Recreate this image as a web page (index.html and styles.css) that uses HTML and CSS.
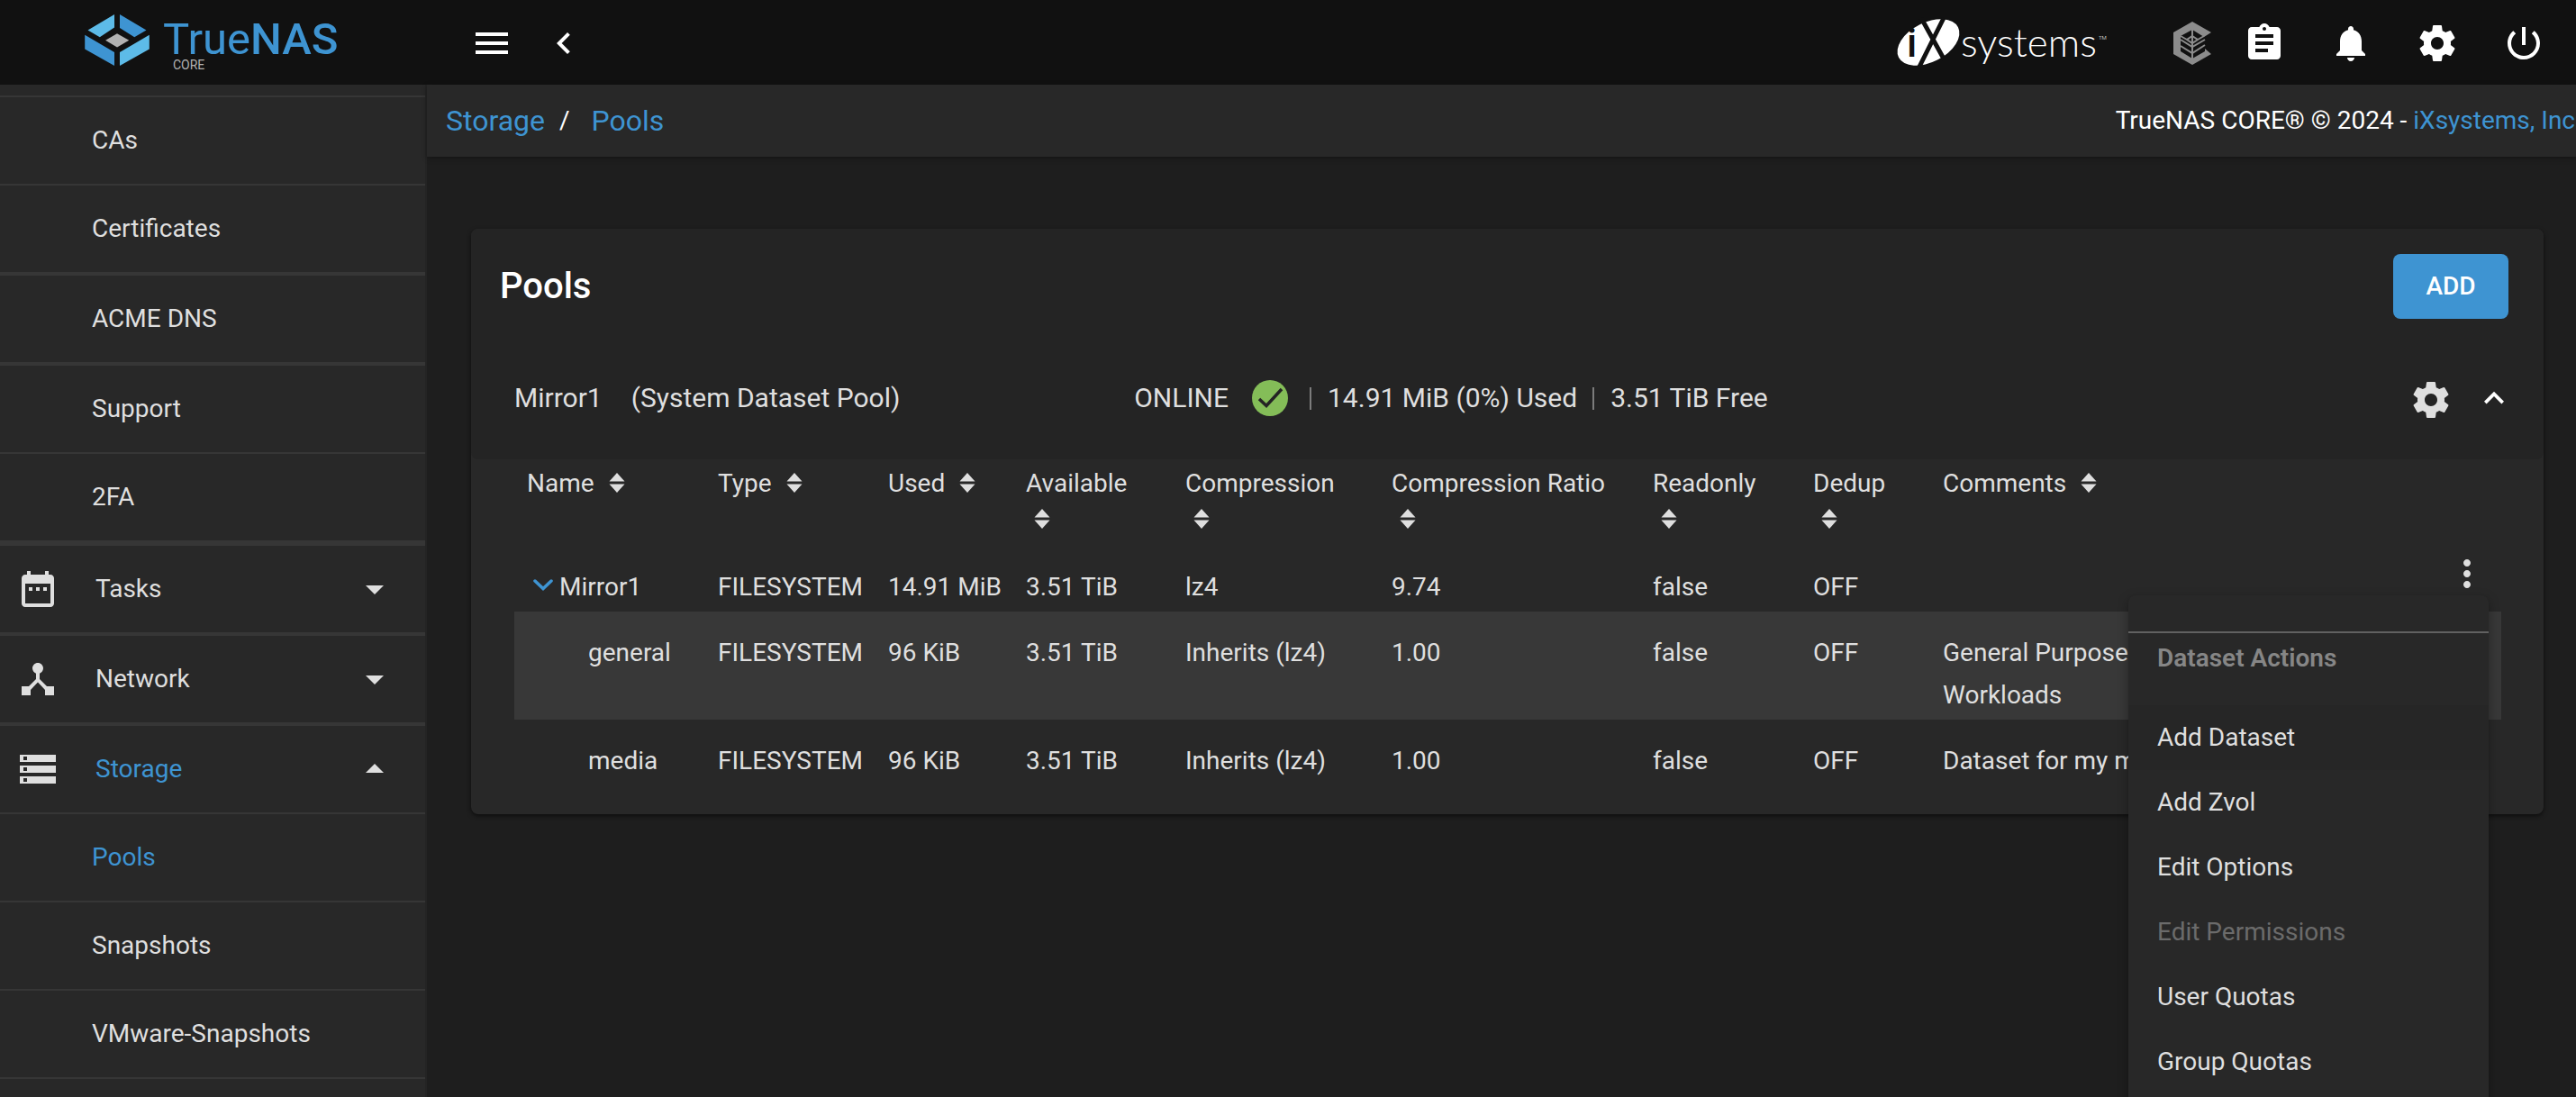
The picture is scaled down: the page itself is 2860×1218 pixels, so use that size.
FILE: index.html
```html
<!DOCTYPE html>
<html lang="en">
<head>
<meta charset="utf-8">
<title>TrueNAS - Pools</title>
<link rel="stylesheet" href="styles.css">
</head>
<body>
<svg class="sprite" aria-hidden="true">
  <symbol id="i-gear" viewBox="0 0 24 24"><path d="M19.43 12.98c.04-.32.07-.64.07-.98s-.03-.66-.07-.98l2.11-1.65c.19-.15.24-.42.12-.64l-2-3.46c-.12-.22-.39-.3-.61-.22l-2.49 1c-.52-.4-1.08-.73-1.69-.98l-.38-2.65C14.46 2.18 14.25 2 14 2h-4c-.25 0-.46.18-.49.42l-.38 2.65c-.61.25-1.17.59-1.69.98l-2.49-1c-.23-.09-.49 0-.61.22l-2 3.46c-.13.22-.07.49.12.64l2.11 1.65c-.04.32-.07.65-.07.98s.03.66.07.98l-2.11 1.65c-.19.15-.24.42-.12.64l2 3.46c.12.22.39.3.61.22l2.49-1c.52.4 1.08.73 1.69.98l.38 2.65c.03.24.24.42.49.42h4c.25 0 .46-.18.49-.42l.38-2.65c.61-.25 1.17-.59 1.69-.98l2.49 1c.23.09.49 0 .61-.22l2-3.46c.12-.22.07-.49-.12-.64l-2.11-1.65zM12 15.5c-1.93 0-3.5-1.57-3.5-3.5s1.57-3.5 3.5-3.5 3.500 1.570 3.500 3.500-1.570 3.500-3.500 3.500z"/></symbol>
  <symbol id="i-down" viewBox="0 0 24 24"><path d="M7 10l5 5 5-5z"/></symbol>
  <symbol id="i-up" viewBox="0 0 24 24"><path d="M7 14l5-5 5 5z"/></symbol>
  <symbol id="i-more" viewBox="0 0 24 24"><path d="M12 8c1.100 0 2-.9 2-2s-.9-2-2-2-2 .9-2 2 .9 2 2 2zm0 2c-1.100 0-2 .9-2 2s.9 2 2 2 2-.9 2-2-.9-2-2-2zm0 6c-1.100 0-2 .9-2 2s.9 2 2 2 2-.9 2-2-.9-2-2-2z"/></symbol>
  <symbol id="i-sort" viewBox="0 0 18 22"><path d="M9 0l8.500 9.500H.5zM9 22l8.500-9.500H.5z"/></symbol>
</svg>

<header class="topbar">
  <a class="brand" href="#" aria-label="TrueNAS CORE">
    <svg class="brand-mark" viewBox="42 48 216 172">
      <path fill="#5dbbe8" d="M141 48v44l-49 32-40-23zM258 117v47l-99 56v-45z"/>
      <path fill="#3e94d2" d="M159 48l89 53-40 23-49-31zM42 117l99 58v45l-99-56z"/>
      <path fill="#b2b2b2" d="M111 135l39-23 40 23-40 23z"/>
    </svg>
    <span class="brand-text">
      <span class="brand-name">True<b>NAS</b></span>
      <span class="brand-edition">CORE</span>
    </span>
  </a>
  <div class="topbar-main">
    <button class="icon-btn" aria-label="Toggle menu"><svg viewBox="0 0 24 24"><path d="M3 18h18v-2H3v2zm0-5h18v-2H3v2zm0-7v2h18V6H3z"/></svg></button>
    <button class="icon-btn" aria-label="Collapse"><svg viewBox="0 0 24 24"><path d="M15.410 7.410L14 6l-6 6 6 6 1.410-1.410L10.830 12z"/></svg></button>
    <a class="vendor" href="#" aria-label="iXsystems">
      <svg viewBox="0 0 234 60">
        <g transform="rotate(-27 36 27)"><ellipse cx="36" cy="27" rx="37" ry="22" fill="#fff"/></g>
        <path d="M28 0L54 47M53 0L25 56" stroke="#111" stroke-width="5" fill="none"/>
        <text class="vendor-i" x="12" y="43">i</text>
        <text class="vendor-name" x="72" y="43">systems</text>
        <text class="vendor-tm" x="225" y="24">TM</text>
      </svg>
    </a>
    <div class="tools">
      <button class="icon-btn" aria-label="TrueCommand"><svg viewBox="0 0 48 48"><path fill="#8c8c8c" fill-rule="evenodd" d="M24 0l21 12-8 5-13-8-13 7v17l13 8 14-8v-3l7 6-21 12L3 36V12z"/><path d="M24 8v33M11 16l7 4M37 16l-7 4M11 20l13 8 14-8M11 27l13 8 14-9M24 16l6 4-6 4-6-4z" fill="none" stroke="#8c8c8c" stroke-width="2"/></svg></button>
      <button class="icon-btn" aria-label="Tasks"><svg viewBox="0 0 24 24"><path d="M19 3h-4.180C14.400 1.840 13.300 1 12 1c-1.300 0-2.400.84-2.820 2H5c-1.100 0-2 .9-2 2v14c0 1.100.9 2 2 2h14c1.100 0 2-.9 2-2V5c0-1.100-.9-2-2-2zm-7 0c.55 0 1 .45 1 1s-.45 1-1 1-1-.45-1-1 .45-1 1-1zm2 14H7v-2h7v2zm3-4H7v-2h10v2zm0-4H7V7h10v2z"/></svg></button>
      <button class="icon-btn" aria-label="Alerts"><svg viewBox="0 0 24 24"><path d="M12 22c1.100 0 2-.9 2-2h-4c0 1.100.89 2 2 2zm6-6v-5c0-3.070-1.640-5.640-4.500-6.320V4c0-.83-.67-1.500-1.500-1.500s-1.500.67-1.500 1.500v.68C7.630 5.360 6 7.920 6 11v5l-2 2v1h16v-1l-2-2z"/></svg></button>
      <button class="icon-btn" aria-label="Settings"><svg><use href="#i-gear"/></svg></button>
      <button class="icon-btn" aria-label="Power"><svg viewBox="0 0 24 24"><path d="M13 3h-2v10h2V3zm4.830 2.170l-1.420 1.420C17.990 7.860 19 9.810 19 12c0 3.870-3.130 7-7 7s-7-3.130-7-7c0-2.190 1.010-4.140 2.580-5.420L6.170 5.170C4.230 6.820 3 9.260 3 12c0 4.970 4.030 9 9 9s9-4.030 9-9c0-2.740-1.230-5.180-3.170-6.830z"/></svg></button>
    </div>
  </div>
</header>

<div class="shell">
  <nav class="sidebar" aria-label="Main">
    <ul class="sub sub-first">
      <li><a href="#">CAs</a></li>
      <li class="thick"><a href="#">Certificates</a></li>
      <li class="thick"><a href="#">ACME DNS</a></li>
      <li><a href="#">Support</a></li>
      <li class="last"><a href="#">2FA</a></li>
    </ul>
    <button class="group"><svg viewBox="0 0 24 24"><path d="M9 11H7v2h2v-2zm4 0h-2v2h2v-2zm4 0h-2v2h2v-2zm2-7h-1V2h-2v2H8V2H6v2H5c-1.110 0-1.990.9-1.990 2L3 20c0 1.100.89 2 2 2h14c1.100 0 2-.9 2-2V6c0-1.100-.9-2-2-2zm0 16H5V9h14v11z"/></svg><span>Tasks</span><svg><use href="#i-down"/></svg></button>
    <button class="group"><svg viewBox="0 0 24 24"><path d="M17 16l-4-4V8.820C14.160 8.400 15 7.300 15 6c0-1.660-1.340-3-3-3S9 4.340 9 6c0 1.300.84 2.400 2 2.820V12l-4 4H3v5h5v-3.050l4-4.200 4 4.200V21h5v-5h-4z"/></svg><span>Network</span><svg><use href="#i-down"/></svg></button>
    <button class="group open"><svg viewBox="0 0 24 24"><path d="M2 20h20v-4H2v4zm2-3h2v2H4v-2zM2 4v4h20V4H2zm4 3H4V5h2v2zm-4 7h20v-4H2v4zm2-3h2v2H4v-2z"/></svg><span>Storage</span><svg><use href="#i-up"/></svg></button>
    <ul class="sub">
      <li><a class="current" href="#">Pools</a></li>
      <li><a href="#">Snapshots</a></li>
      <li><a href="#">VMware-Snapshots</a></li>
    </ul>
  </nav>

  <main class="main">
    <div class="crumbs">
      <div class="crumb-path"><a href="#">Storage</a><span>/</span><a href="#">Pools</a></div>
      <div class="copyright">TrueNAS CORE® © 2024 - <a href="#">iXsystems, Inc</a></div>
    </div>

    <section class="card">
      <div class="card-head">
        <h1>Pools</h1>
        <button class="add">ADD</button>
      </div>
      <div class="pool">
        <div class="pool-name"><span>Mirror1</span><span>(System Dataset Pool)</span></div>
        <div class="pool-status">
          <span>ONLINE</span>
          <svg class="check" viewBox="0 0 40 40"><circle cx="20" cy="20" r="20" fill="#84bd58"/><path d="M8 21l8 7.500L33 10" fill="none" stroke="#242424" stroke-width="3.500"/></svg>
          <span class="stat">14.91 MiB (0%) Used</span><span class="stat">3.51 TiB Free</span>
        </div>
        <div class="pool-actions">
          <button class="icon-btn dim" aria-label="Pool operations"><svg><use href="#i-gear"/></svg></button>
          <button class="icon-btn small" aria-label="Collapse pool"><svg viewBox="0 0 24 24"><path d="M12 7l-6 6 1.410 1.410L12 9.830l4.590 4.580L18 13z"/></svg></button>
        </div>
      </div>

      <div class="table-wrap">
        <table>
          <colgroup><col class="c-name"><col class="c-type"><col class="c-used"><col class="c-avail"><col class="c-comp"><col class="c-ratio"><col class="c-read"><col class="c-dedup"><col class="c-comments"><col></colgroup>
          <thead>
            <tr>
              <th>Name <svg class="sort"><use href="#i-sort"/></svg></th>
              <th>Type <svg class="sort"><use href="#i-sort"/></svg></th>
              <th>Used <svg class="sort"><use href="#i-sort"/></svg></th>
              <th>Available <svg class="sort"><use href="#i-sort"/></svg></th>
              <th>Compression <svg class="sort"><use href="#i-sort"/></svg></th>
              <th>Compression Ratio <svg class="sort"><use href="#i-sort"/></svg></th>
              <th>Readonly <svg class="sort"><use href="#i-sort"/></svg></th>
              <th>Dedup <svg class="sort"><use href="#i-sort"/></svg></th>
              <th>Comments <svg class="sort"><use href="#i-sort"/></svg></th>
              <th></th>
            </tr>
          </thead>
          <tbody>
            <tr>
              <td class="root"><svg class="twist" viewBox="0 0 22 13"><path d="M2 2l9 8.500L20 2" fill="none" stroke="#3e94d2" stroke-width="3.500" stroke-linecap="round"/></svg>Mirror1</td>
              <td>FILESYSTEM</td><td>14.91 MiB</td><td>3.51 TiB</td><td>lz4</td><td>9.74</td><td>false</td><td>OFF</td><td></td>
              <td class="actions">
                <div class="menu-anchor">
                  <button class="icon-btn dim" aria-label="Dataset menu" aria-expanded="true"><svg><use href="#i-more"/></svg></button>
                  <div class="menu" role="menu">
                    <div class="menu-title">Dataset Actions</div>
                    <button role="menuitem" class="focused">Add Dataset</button>
                    <button role="menuitem">Add Zvol</button>
                    <button role="menuitem">Edit Options</button>
                    <button role="menuitem" disabled>Edit Permissions</button>
                    <button role="menuitem">User Quotas</button>
                    <button role="menuitem">Group Quotas</button>
                  </div>
                </div>
              </td>
            </tr>
            <tr class="hover">
              <td class="child">general</td>
              <td>FILESYSTEM</td><td>96 KiB</td><td>3.51 TiB</td><td>Inherits (lz4)</td><td>1.00</td><td>false</td><td>OFF</td><td class="comment">General Purpose Workloads</td><td></td>
            </tr>
            <tr>
              <td class="child">media</td>
              <td>FILESYSTEM</td><td>96 KiB</td><td>3.51 TiB</td><td>Inherits (lz4)</td><td>1.00</td><td>false</td><td>OFF</td><td class="comment">Dataset for my media</td><td></td>
            </tr>
          </tbody>
        </table>
      </div>
    </section>
  </main>
</div>
</body>
</html>
```
FILE: styles.css
```css
:root {
  --blue: #3e94d2;
  --bg: #1e1e1e;
  --panel: #282828;
  --panel-dark: #242424;
  --line: #363636;
  --text: #dfdfdf;
}

* { box-sizing: border-box; }

body {
  margin: 0;
  height: 100vh;
  display: flex;
  flex-direction: column;
  overflow: hidden;
  background: var(--bg);
  color: var(--text);
  font: 400 28px/32px Roboto, "Liberation Sans", sans-serif;
}

a { color: inherit; text-decoration: none; }
button { font: inherit; color: inherit; background: none; border: 0; padding: 0; text-align: left; }
svg { display: block; fill: currentColor; }
ul { list-style: none; margin: 0; padding: 0; }
.sprite { display: none; }

.icon-btn { width: 48px; height: 48px; flex: none; color: #fff; }
.icon-btn svg { width: 100%; height: 100%; }
.icon-btn.dim { color: var(--text); }
.icon-btn.small { width: 44px; height: 44px; }

/* Top bar */
.topbar { display: flex; flex: none; height: 94px; background: #111; }
.brand { display: flex; flex: none; width: 474px; padding: 16px 0 0 94px; gap: 15px; }
.brand-mark { width: 72px; height: 57px; }
.brand-text { display: flex; flex-direction: column; padding-top: 6px; color: var(--blue); }
.brand-name { font-size: 49px; line-height: 44px; font-weight: 400; }
.brand-name b { font-weight: 500; }
.brand-edition { padding-left: 11px; font-size: 14px; line-height: 12px; color: #b2b2b2; }
.topbar-main { display: flex; flex: 1; gap: 32px; padding: 24px 34px 0 48px; }
.vendor { margin: -4px 0 0 auto; }
.vendor svg { width: 234px; height: 60px; overflow: visible; }
.vendor text { fill: #fff; }
.vendor .vendor-i { fill: #111; font: 500 44px Roboto, sans-serif; }
.vendor .vendor-name { font: 300 44px Lato, sans-serif; }
.vendor .vendor-tm { font: 300 6px Roboto, sans-serif; }
.tools { display: flex; gap: 48px; margin-left: 39px; }
.tools .icon-btn:first-child { margin-right: -16px; }

/* Sidebar */
.shell { display: flex; flex: 1; min-height: 0; }
.sidebar { flex: none; width: 474px; background: var(--panel); border-right: 2px solid #242424; overflow: hidden; }
.sub a { display: flex; align-items: center; height: 96px; padding-left: 102px; }
.sub li { border-bottom: 2px solid var(--line); }
.sub .thick { border-bottom-width: 4px; }
.sub .last { border-bottom-width: 6px; }
.sub-first { padding-top: 12px; }
.sub-first li:first-child { border-top: 2px solid var(--line); }
.sub .current, .open span { color: var(--blue); }
.group { display: flex; align-items: center; width: 100%; height: 100px; padding: 0 32px 0 18px; border-bottom: 4px solid var(--line); }
.group.open { height: 98px; border-bottom-width: 2px; }
.group svg { width: 48px; height: 48px; }
.group span { flex: 1; padding-left: 40px; }

/* Breadcrumb */
.main { flex: 1; min-width: 0; }
.crumbs { display: flex; justify-content: space-between; align-items: center; height: 80px; padding: 0 1px 0 21px; background: var(--panel); color: #fff; box-shadow: 0 2px 6px rgba(0, 0, 0, .3); }
.crumbs a { color: var(--blue); }
.crumb-path { display: flex; gap: 16px; font-size: 32px; }
.crumb-path span { font-size: 28px; padding-right: 8px; }

/* Card */
.card { margin: 80px 36px 0 49px; background: var(--panel); border-radius: 8px; box-shadow: 0 2px 5px rgba(0, 0, 0, .6); }
.card-head { display: flex; justify-content: space-between; align-items: center; height: 128px; padding: 0 39px 0 32px; background: var(--panel-dark); border-radius: 8px 8px 0 0; }
h1 { margin: 0; font-size: 40px; font-weight: 500; line-height: 48px; color: #fff; }
.add { width: 128px; height: 72px; border-radius: 8px; background: var(--blue); color: #fff; font-weight: 500; text-align: center; }

.pool { display: grid; grid-template-columns: 31% 1fr auto; align-items: center; height: 128px; padding: 0 33px 8px 48px; background: var(--panel-dark); border-radius: 0 0 8px 8px; font-size: 30px; }
.pool-name { display: flex; gap: 32px; }
.pool-status { display: flex; align-items: center; }
.check { width: 40px; height: 40px; margin: 0 24px 0 26px; }
.stat { display: flex; align-items: center; margin-right: 17px; }
.stat::before { content: ""; width: 2px; height: 25px; margin-right: 18px; background: #7c7c7c; }
.pool-actions { display: flex; align-items: center; gap: 24px; padding-top: 4px; }

/* Dataset table */
.table-wrap { padding: 0 47px 32px 48px; }
table { width: 100%; table-layout: fixed; border-collapse: collapse; }
.c-name { width: 212px; }
.c-type { width: 189px; }
.c-used { width: 153px; }
.c-avail { width: 177px; }
.c-comp { width: 229px; }
.c-ratio { width: 290px; }
.c-read { width: 178px; }
.c-dedup { width: 144px; }
.c-comments { width: 320px; }
th { height: 96px; padding: 7px 14px 0; text-align: left; vertical-align: top; font-weight: 400; line-height: 40px; }
td { padding: 22px 14px 4px; vertical-align: top; line-height: 47px; white-space: nowrap; }
.sort { display: inline-block; width: 18px; height: 22px; margin: 0 10px 0 9px; vertical-align: -1px; }
.hover { background: #383838; }
.root { padding-left: 21px; }
.twist { display: inline-block; width: 22px; height: 13px; margin-right: 7px; vertical-align: 5px; }
.child { padding-left: 82px; }
.comment { white-space: normal; }
.actions { padding: 7px 14px 0; }

/* Dropdown menu */
.menu-anchor { position: relative; width: 48px; height: 48px; margin-left: auto; line-height: 32px; }
.menu-anchor > .icon-btn { display: block; }
.menu { position: absolute; z-index: 2; top: 100%; right: 0; width: 400px; padding: 40px 0 16px; background: var(--panel); border-radius: 8px; box-shadow: 0 4px 12px rgba(0, 0, 0, .35); }
.menu-title { height: 82px; padding: 12px 32px 0; border-top: 2px solid #616161; font-weight: 600; color: #868686; }
.menu button { display: block; width: 100%; height: 72px; padding: 0 32px; }
.menu button.focused { background: #262626; }
.menu button:disabled { color: #6b6b6b; }
```
